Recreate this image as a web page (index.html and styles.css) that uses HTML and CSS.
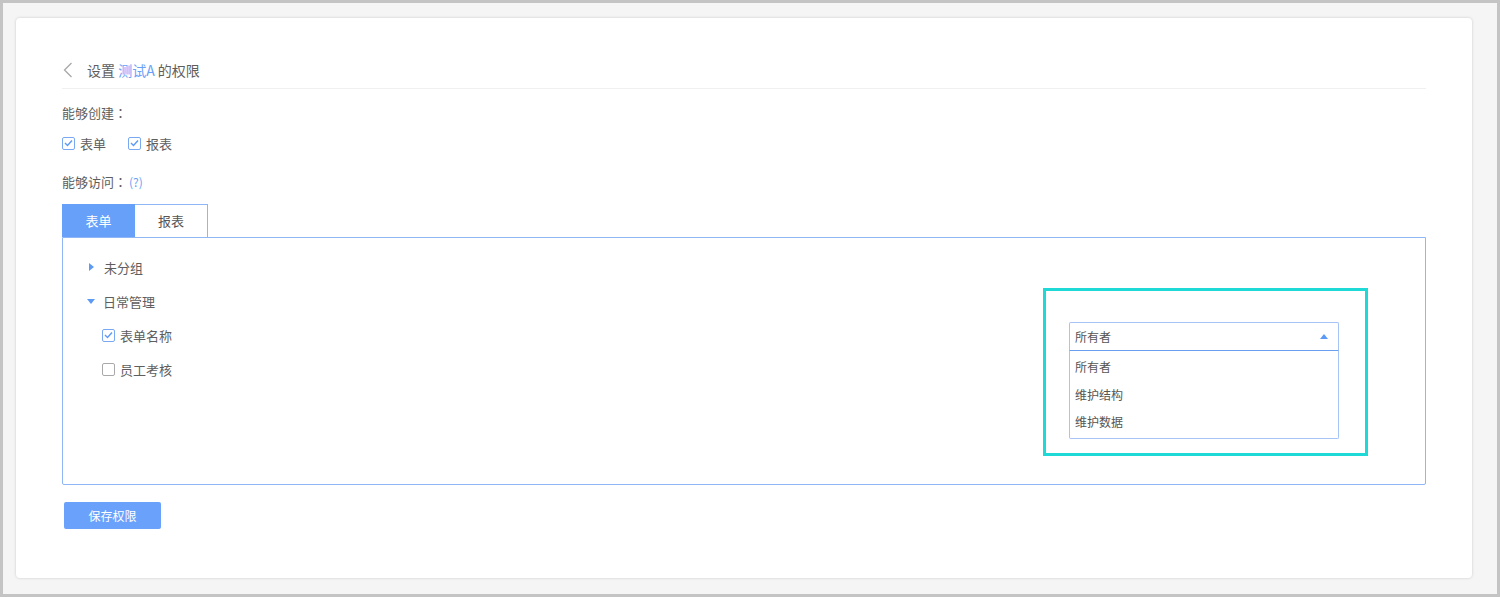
FILE: index.html
```html
<!DOCTYPE html>
<html lang="zh">
<head>
<meta charset="utf-8">
<link rel="stylesheet" href="styles.css">
</head>
<body>
<div class="screen">
  <div class="card">
    <div class="header">
      <svg class="back" width="10" height="16" viewBox="0 0 10 16"><polyline points="8.5,1 1.5,8 8.5,15" fill="none" stroke="#a8a8a8" stroke-width="1.3"/></svg>
      <span class="title">设置 <span class="blue">测试A</span> 的权限</span>
    </div>
    <div class="label label-create">能够创建<span class="colon" lang="zh-Hant">：</span></div>
    <div class="check-row">
      <label class="chk"><span class="box checked"><svg width="9" height="8" viewBox="0 0 9 8"><polyline points="1,4 3.5,6.5 8,1.5" fill="none" stroke="#5d9af6" stroke-width="1.4"/></svg></span>表单</label>
      <label class="chk"><span class="box checked"><svg width="9" height="8" viewBox="0 0 9 8"><polyline points="1,4 3.5,6.5 8,1.5" fill="none" stroke="#5d9af6" stroke-width="1.4"/></svg></span>报表</label>
    </div>
    <div class="label label-access">能够访问<span class="colon" lang="zh-Hant">：</span><span class="help">(?)</span></div>
    <div class="tabs">
      <div class="tab active">表单</div>
      <div class="tab">报表</div>
    </div>
    <div class="panel">
      <div class="tree">
        <div class="node"><span class="tri-right"></span>未分组</div>
        <div class="node"><span class="tri-down"></span>日常管理</div>
        <div class="leaf"><span class="box checked"><svg width="9" height="8" viewBox="0 0 9 8"><polyline points="1,4 3.5,6.5 8,1.5" fill="none" stroke="#5d9af6" stroke-width="1.4"/></svg></span>表单名称</div>
        <div class="leaf"><span class="box"></span>员工考核</div>
      </div>
      <div class="highlight">
        <div class="select">
          <div class="select-head"><span>所有者</span><span class="tri-up"></span></div>
          <div class="select-list">
            <div class="opt">所有者</div>
            <div class="opt">维护结构</div>
            <div class="opt">维护数据</div>
          </div>
        </div>
      </div>
    </div>
    <button class="save">保存权限</button>
  </div>
</div>
</body>
</html>
```
FILE: styles.css
```css
* { box-sizing: border-box; }
html, body { margin: 0; padding: 0; }
body {
  font-family: "Noto Sans CJK SC", "Noto Sans", sans-serif;
  font-size: 13px;
  color: #5e5e5e;
}
.screen {
  width: 1500px;
  height: 597px;
  border: 3px solid #c4c4c4;
  background: #f5f5f5;
  padding: 15px 0 0 13px;
}
.card {
  width: 1456px;
  height: 560px;
  background: #fff;
  border-radius: 4px;
  box-shadow: 0 0 3px rgba(0,0,0,0.18);
  padding: 40px 46px 0 46px;
}
.header {
  display: flex;
  align-items: center;
  height: 31px;
  padding-bottom: 7px;
  border-bottom: 1px solid #f0f0f0;
}
.back { margin-left: 1px; margin-right: 14px; }
.title { font-size: 14px; color: #5e5e5e; }
.blue { color: #6aa1f8; }
.label { height: 20px; line-height: 20px; }
.colon { font-family: "Noto Sans CJK TC", "Noto Sans CJK JP", sans-serif; }
.label-create { margin-top: 14px; }
.check-row { display: flex; margin-top: 10px; height: 20px; align-items: center; }
.chk { display: flex; align-items: center; margin-right: 22px; }
.box {
  display: inline-flex;
  align-items: center;
  justify-content: center;
  width: 13px;
  height: 13px;
  border: 1px solid #a9a9a9;
  border-radius: 2px;
  margin-right: 5px;
  background: #fff;
}
.box.checked { border-color: #7aa9f3; }
.label-access { margin-top: 19px; }
.help { color: #6aa1f8; font-size: 12px; margin-left: 2px; }
.tabs { display: flex; margin-top: 12px; height: 33px; }
.tab {
  width: 73px;
  height: 33px;
  line-height: 32px;
  text-align: center;
  border: 1px solid #8fb6f5;
  border-bottom: none;
  background: #fff;
  color: #555;
}
.tab.active { background: #66a0f9; border-color: #66a0f9; color: #fff; }
.tab + .tab { border-left: none; }
.panel {
  display: flex;
  justify-content: space-between;
  height: 248px;
  border: 1px solid #8fb6f5;
  border-radius: 0 0 2px 2px;
}
.tree { padding: 18px 0 0 24px; }
.node, .leaf { height: 34px; display: flex; align-items: center; padding-bottom: 12px; }
.tri-right {
  width: 0; height: 0;
  border-top: 4px solid transparent;
  border-bottom: 4px solid transparent;
  border-left: 5px solid #5d9af6;
  margin: 0 10px 0 2px;
}
.tri-down {
  width: 0; height: 0;
  border-left: 4.5px solid transparent;
  border-right: 4.5px solid transparent;
  border-top: 5px solid #5d9af6;
  margin: 0 8px 0 0;
}
.leaf { padding-left: 15px; }
.highlight {
  width: 325px;
  height: 168px;
  margin: 50px 57px 0 0;
  border: 3px solid #1fd9d7;
  padding: 31px 0 0 23px;
}
.select { width: 270px; }
.select-head {
  height: 29px;
  border: 1px solid #a6c4f6;
  border-bottom: 1px solid #6a9ff0;
  border-radius: 2px 2px 0 0;
  display: flex;
  align-items: center;
  justify-content: space-between;
  padding: 0 10px 0 5px;
  font-size: 12px;
  color: #555;
}
.tri-up {
  width: 0; height: 0;
  border-left: 4px solid transparent;
  border-right: 4px solid transparent;
  border-bottom: 5px solid #5d9af6;
}
.select-list {
  border: 1px solid #a6c4f6;
  border-top: none;
  border-radius: 0 0 2px 2px;
  padding: 2px 0;
}
.opt { height: 27.5px; line-height: 27.5px; padding-left: 5px; font-size: 12px; color: #555; }
.save {
  margin: 17px 0 0 2px;
  width: 97px;
  height: 27px;
  border: none;
  border-radius: 2px;
  background: #6aa2fb;
  color: #fff;
  font-family: inherit;
  font-size: 12px;
  padding: 0;
}
```
